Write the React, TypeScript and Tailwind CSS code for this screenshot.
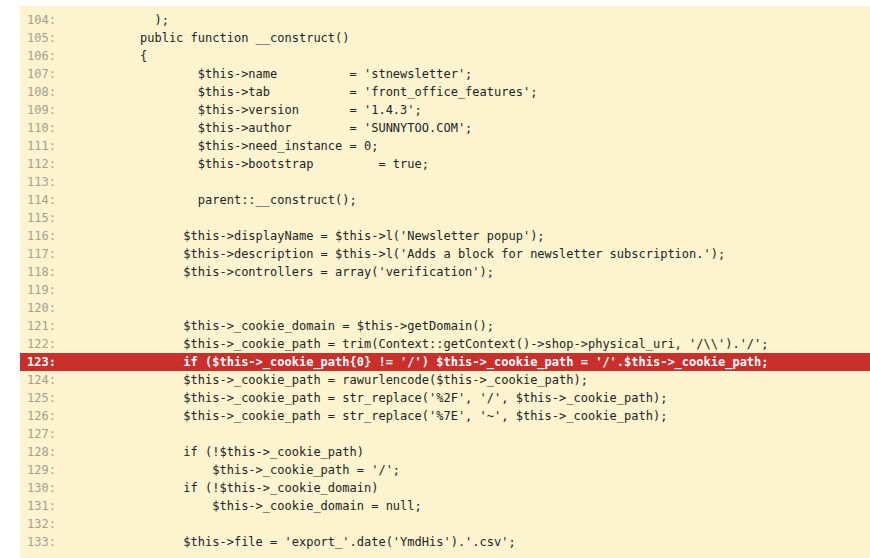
const lines: { n: number; code: string; hl?: boolean }[] = [
  { n: 104, code: "  );" },
  { n: 105, code: "public function __construct()" },
  { n: 106, code: "{" },
  { n: 107, code: "        $this->name          = 'stnewsletter';" },
  { n: 108, code: "        $this->tab           = 'front_office_features';" },
  { n: 109, code: "        $this->version       = '1.4.3';" },
  { n: 110, code: "        $this->author        = 'SUNNYTOO.COM';" },
  { n: 111, code: "        $this->need_instance = 0;" },
  { n: 112, code: "        $this->bootstrap         = true;" },
  { n: 113, code: "" },
  { n: 114, code: "        parent::__construct();" },
  { n: 115, code: "" },
  { n: 116, code: "      $this->displayName = $this->l('Newsletter popup');" },
  { n: 117, code: "      $this->description = $this->l('Adds a block for newsletter subscription.');" },
  { n: 118, code: "      $this->controllers = array('verification');" },
  { n: 119, code: "" },
  { n: 120, code: "" },
  { n: 121, code: "      $this->_cookie_domain = $this->getDomain();" },
  { n: 122, code: "      $this->_cookie_path = trim(Context::getContext()->shop->physical_uri, '/\\\\').'/';" },
  { n: 123, code: "      if ($this->_cookie_path{0} != '/') $this->_cookie_path = '/'.$this->_cookie_path;", hl: true },
  { n: 124, code: "      $this->_cookie_path = rawurlencode($this->_cookie_path);" },
  { n: 125, code: "      $this->_cookie_path = str_replace('%2F', '/', $this->_cookie_path);" },
  { n: 126, code: "      $this->_cookie_path = str_replace('%7E', '~', $this->_cookie_path);" },
  { n: 127, code: "" },
  { n: 128, code: "      if (!$this->_cookie_path)" },
  { n: 129, code: "          $this->_cookie_path = '/';" },
  { n: 130, code: "      if (!$this->_cookie_domain)" },
  { n: 131, code: "          $this->_cookie_domain = null;" },
  { n: 132, code: "" },
  { n: 133, code: "      $this->file = 'export_'.date('YmdHis').'.csv';" },
];

export default function App() {
  return (
    <div className="h-[558px] w-[870px] overflow-hidden bg-white pl-5 pt-1.5">
      <div
        className="h-full bg-[#fcf4cf] pt-[5px] text-[12px] leading-[18px]"
        style={{ fontFamily: '"DejaVu Sans Mono", "Liberation Mono", monospace' }}
      >
        {lines.map((l) => (
          <div
            key={l.n}
            className={
              l.hl
                ? 'flex h-[18px] bg-[#c9302c] font-bold text-white'
                : 'flex h-[18px] text-[#222222]'
            }
          >
            <span className={l.hl ? 'w-[120px] shrink-0 pl-[7px]' : 'w-[120px] shrink-0 pl-[7px] text-[#a39f8c]'}>
              {l.n}:
            </span>
            <span className="whitespace-pre">{l.code}</span>
          </div>
        ))}
      </div>
    </div>
  );
}
